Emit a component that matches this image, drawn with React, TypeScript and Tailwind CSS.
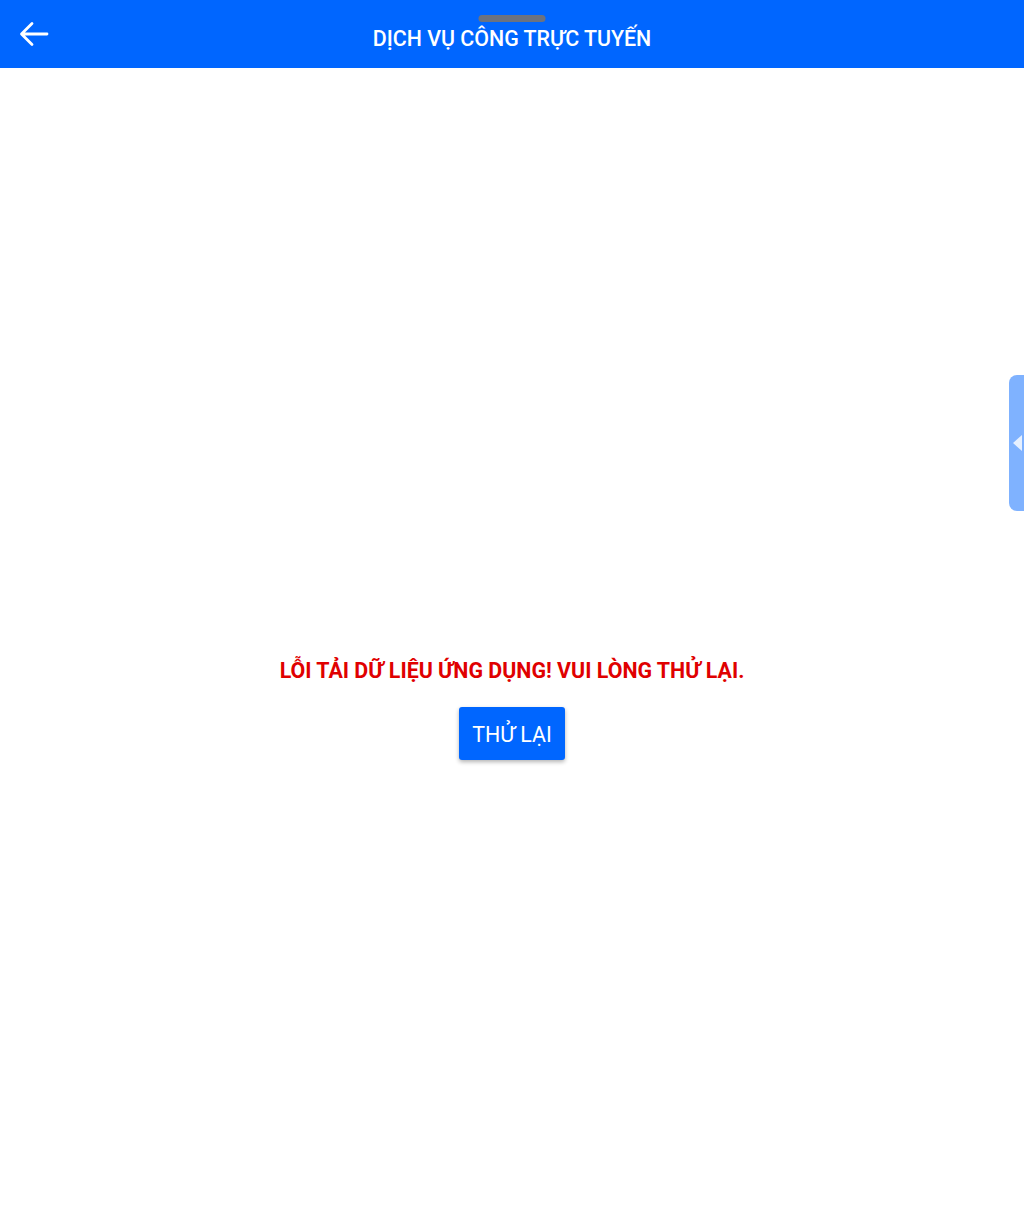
export default function App() {
  return (
    <div
      className="relative flex min-h-[1205px] w-full flex-col bg-white"
      style={{ fontFamily: 'Roboto, "Noto Sans", sans-serif' }}
    >
      {/* Header */}
      <div className="relative flex h-[68px] items-center justify-center bg-[#0066ff]">
        <button className="absolute left-[18px] top-[20px] flex h-[28px] w-[32px] items-center justify-center text-white">
          <svg width="30" height="26" viewBox="0 0 30 26" fill="none">
            <path
              d="M28 13H3M13 2.5L2.5 13L13 23.5"
              stroke="white"
              strokeWidth="2.8"
              strokeLinecap="round"
              strokeLinejoin="round"
            />
          </svg>
        </button>
        <div className="absolute left-1/2 top-[15px] h-[7px] w-[67px] -translate-x-1/2 rounded-full bg-[#6b7280]" />
        <h1 className="mt-[10px] text-[21.4px] font-medium text-white">
          DỊCH VỤ CÔNG TRỰC TUYẾN
        </h1>
      </div>

      {/* Content */}
      <div className="flex flex-col items-center pt-[585px]">
        <p className="text-[21.4px] font-bold leading-[36px] text-[#e00000]">
          LỖI TẢI DỮ LIỆU ỨNG DỤNG! VUI LÒNG THỬ LẠI.
        </p>
        <button className="mt-[18px] flex h-[53px] w-[106px] items-center justify-center rounded-[3px] bg-[#0066ff] pt-[3px] text-[21.4px] text-white shadow-[0_2px_4px_rgba(0,0,0,0.3)]">
          THỬ LẠI
        </button>
      </div>

      {/* Side tab */}
      <div className="absolute right-0 top-[375px] flex h-[136px] w-[15px] items-center rounded-l-[8px] bg-[#7fb2ff] pl-[4px]">
        <div className="h-0 w-0 border-y-[8px] border-r-[9px] border-y-transparent border-r-[#e6f0ff]" />
      </div>
    </div>
  );
}
